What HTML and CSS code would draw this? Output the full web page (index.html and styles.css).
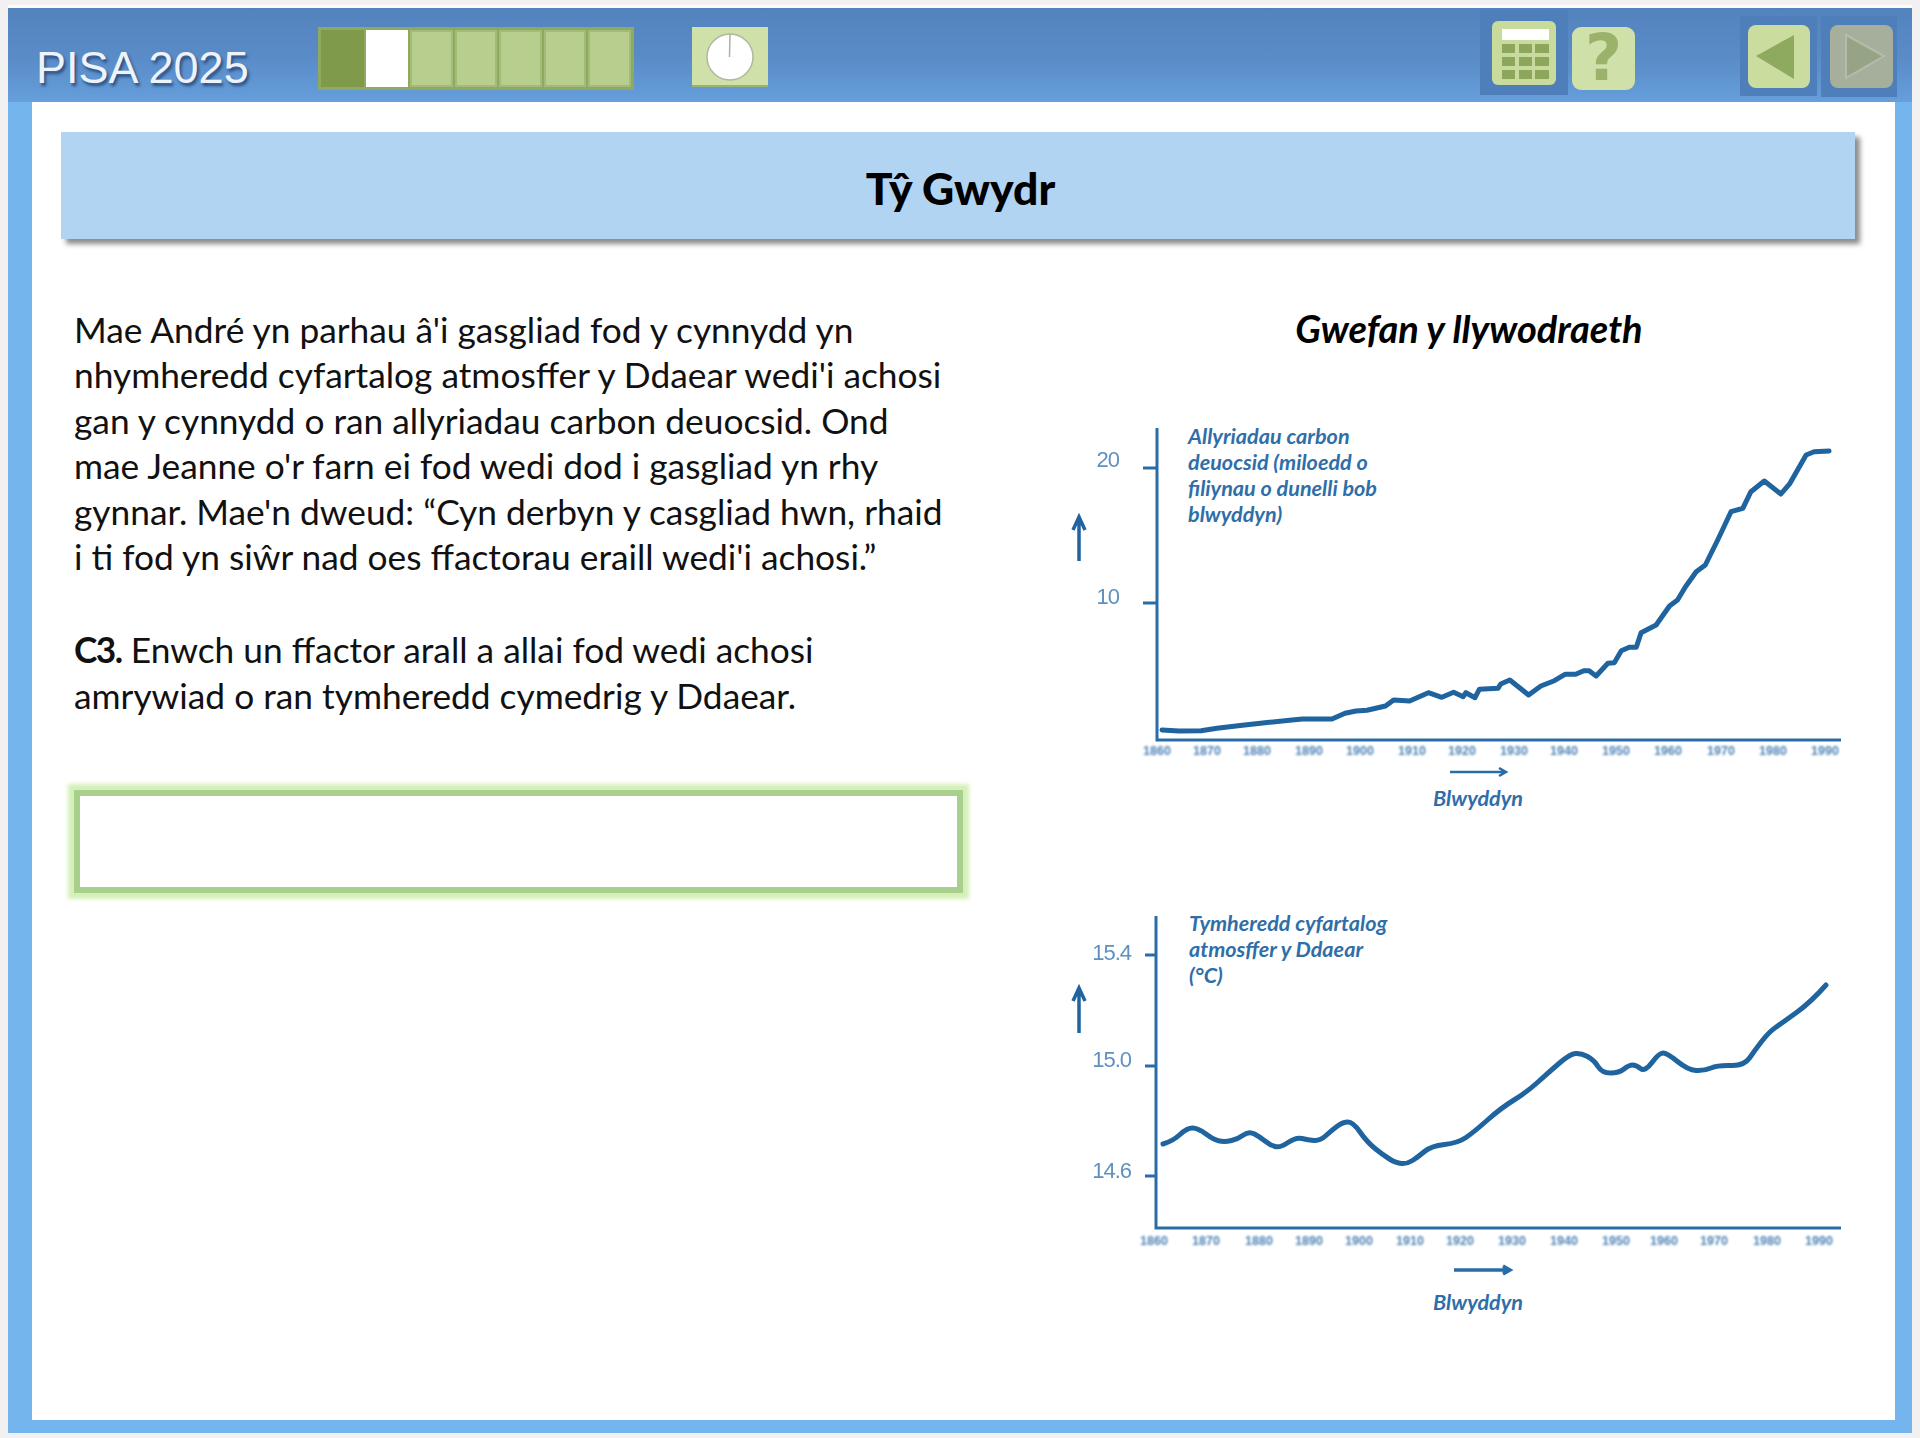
FILE: index.html
```html
<!DOCTYPE html>
<html lang="cy">
<head>
  <meta charset="UTF-8" />
  <title>PISA 2025 - Tŷ Gwydr</title>
  <link rel="stylesheet" href="styles.css">
</head>
<body>
  <div class="frame">
    <header class="topbar">
      <div class="brand">PISA 2025</div>
      <div class="progress">
        <span class="step done"></span>
        <span class="step current"></span>
        <span class="step"></span>
        <span class="step"></span>
        <span class="step"></span>
        <span class="step"></span>
        <span class="step"></span>
      </div>
      <div class="timer">
        <svg width="76" height="60" viewBox="0 0 76 60">
          <circle cx="38" cy="30" r="23" fill="#fff" stroke="#aeb9a0" stroke-width="1.5"/>
          <line x1="38" y1="7" x2="37.5" y2="30" stroke="#a9b59a" stroke-width="1.5"/>
        </svg>
      </div>
      <div class="tools">
        <div class="tool-wrap calc-wrap">
          <svg width="64" height="64" viewBox="0 0 64 64">
            <rect x="0" y="0" width="64" height="64" rx="6" fill="#c8da9c"/>
            <rect x="10" y="8" width="47" height="11" fill="#fff"/>
            <g fill="#8ca75c">
              <rect x="10" y="23" width="13" height="9"/><rect x="27" y="23" width="13" height="9"/><rect x="43" y="23" width="14" height="9"/>
              <rect x="10" y="36" width="13" height="9"/><rect x="27" y="36" width="13" height="9"/><rect x="43" y="36" width="14" height="9"/>
              <rect x="10" y="49" width="13" height="9"/><rect x="27" y="49" width="13" height="9"/><rect x="43" y="49" width="14" height="9"/>
            </g>
          </svg>
        </div>
        <div class="help">?</div>
        <div class="tool-wrap back-wrap">
          <svg width="62" height="63" viewBox="0 0 62 63">
            <rect width="62" height="63" rx="8" fill="#cbdc9f"/>
            <polygon points="8,31 46,10 46,54" fill="#8eaa5f"/>
          </svg>
        </div>
        <div class="tool-wrap next-wrap">
          <svg width="63" height="63" viewBox="0 0 63 63">
            <rect width="63" height="63" rx="8" fill="#a6af9b"/>
            <polygon points="16,10 54,31 16,53" fill="#96a384" stroke="#b4bcab" stroke-width="2"/>
          </svg>
        </div>
      </div>
    </header>

    <main class="sheet">
      <h1 class="title">Tŷ Gwydr</h1>
      <div class="columns">
        <section class="question">
          <p>Mae André yn parhau â'i gasgliad fod y cynnydd yn<br>
          nhymheredd cyfartalog atmosffer y Ddaear wedi'i achosi<br>
          gan y cynnydd o ran allyriadau carbon deuocsid. Ond<br>
          mae Jeanne o'r farn ei fod wedi dod i gasgliad yn rhy<br>
          gynnar. Mae'n dweud: “Cyn derbyn y casgliad hwn, rhaid<br>
          i ti fod yn siŵr nad oes ffactorau eraill wedi'i achosi.”</p>
          <p><b>C3.</b> Enwch un ffactor arall a allai fod wedi achosi<br>
          amrywiad o ran tymheredd cymedrig y Ddaear.</p>
          <div class="answer"></div>
        </section>

        <section class="charts">
          <h2>Gwefan y llywodraeth</h2>

          <svg class="chart first" width="800" height="420" viewBox="1060 410 800 420">
            <g class="axis">
              <path d="M1157 428V740H1841"/>
              <path d="M1143 468H1157M1143 603H1157"/>
            </g>
            <text class="val" x="1119" y="467" text-anchor="end">20</text>
            <text class="val" x="1119" y="604" text-anchor="end">10</text>
            <g class="arrow">
              <path class="up" d="M1079 561V518M1073 530L1079 517L1085 530"/>
              <path d="M1450 772H1506M1499 768L1506 772L1499 776"/>
            </g>
            <text class="lab" x="1188" y="444">Allyriadau carbon</text>
            <text class="lab" x="1188" y="470">deuocsid (miloedd o</text>
            <text class="lab" x="1188" y="496">filiynau o dunelli bob</text>
            <text class="lab" x="1188" y="522">blwyddyn)</text>
            <g class="years" text-anchor="middle">
              <text x="1157" y="755">1860</text><text x="1207" y="755">1870</text><text x="1257" y="755">1880</text>
              <text x="1309" y="755">1890</text><text x="1360" y="755">1900</text><text x="1412" y="755">1910</text>
              <text x="1462" y="755">1920</text><text x="1514" y="755">1930</text><text x="1564" y="755">1940</text>
              <text x="1616" y="755">1950</text><text x="1668" y="755">1960</text><text x="1721" y="755">1970</text>
              <text x="1773" y="755">1980</text><text x="1825" y="755">1990</text>
            </g>
            <text class="lab" x="1478" y="806" text-anchor="middle">Blwyddyn</text>
            <polyline class="curve" points="1162,730 1179,731 1201,730.7 1217,728.3 1238,725.7 1265,722.7 1292,720 1302.5,719 1332,719 1345,713.3 1356,711 1367,710.3 1385.5,706 1393.6,700 1409.6,701 1428.4,692.7 1441.8,697.3 1453.6,692.3 1463.2,696.7 1465.9,692.7 1475,697.7 1479.3,689.3 1498,688.3 1500.7,684 1509.8,680 1528.6,695 1540.9,686 1554.3,680.7 1565,674.3 1575.7,674.3 1583.8,670.7 1589.1,670.7 1596.1,676 1607.9,663.3 1614.3,662.7 1621.3,650.7 1629.3,647.3 1636.3,647.3 1641.1,632.7 1656.1,625 1669.5,606 1677.5,600 1685.5,586.7 1696.2,571.7 1705.3,565 1717.7,540 1731,511.7 1742.8,508.3 1750.9,491.7 1764.3,481 1780.9,494 1790,483.3 1806.1,455 1814.1,451.7 1829.1,451"/>
          </svg>

          <svg class="chart second" width="800" height="440" viewBox="1060 890 800 440">
            <g class="axis">
              <path d="M1156 916V1228H1841"/>
              <path d="M1145 955H1156M1145 1066H1156M1145 1176H1156"/>
            </g>
            <text class="val" x="1131" y="960" text-anchor="end">15.4</text>
            <text class="val" x="1131" y="1067" text-anchor="end">15.0</text>
            <text class="val" x="1131" y="1178" text-anchor="end">14.6</text>
            <g class="arrow">
              <path class="up" d="M1079 1033V989M1073 1001L1079 988L1085 1001"/>
              <path class="thick" d="M1454 1270H1510M1503 1266L1510 1270L1503 1274"/>
            </g>
            <text class="lab" x="1189" y="931">Tymheredd cyfartalog</text>
            <text class="lab" x="1189" y="957">atmosffer y Ddaear</text>
            <text class="lab" x="1189" y="983">(°C)</text>
            <g class="years" text-anchor="middle">
              <text x="1154" y="1245">1860</text><text x="1206" y="1245">1870</text><text x="1259" y="1245">1880</text>
              <text x="1309" y="1245">1890</text><text x="1359" y="1245">1900</text><text x="1410" y="1245">1910</text>
              <text x="1460" y="1245">1920</text><text x="1512" y="1245">1930</text><text x="1564" y="1245">1940</text>
              <text x="1616" y="1245">1950</text><text x="1664" y="1245">1960</text><text x="1714" y="1245">1970</text>
              <text x="1767" y="1245">1980</text><text x="1819" y="1245">1990</text>
            </g>
            <text class="lab" x="1478" y="1310" text-anchor="middle">Blwyddyn</text>
            <path class="curve" d="M1163 1144 Q1173 1141 1180 1134.5 Q1187 1128 1192.5 1128 Q1198 1128 1206 1134 Q1214 1140 1219.5 1141 Q1225 1142 1231.5 1140.5 Q1238 1139 1243.5 1135 Q1249 1131 1254.5 1134 Q1260 1137 1265 1141 Q1270 1145 1275 1146.5 Q1280 1148 1288 1142.5 Q1296 1137 1302 1138.5 Q1308 1140 1314 1140.5 Q1320 1141 1326 1135.5 Q1332 1130 1337.5 1126 Q1343 1122 1348 1122 Q1353 1122 1360 1132 Q1367 1142 1375 1148.5 Q1383 1155 1389.5 1159 Q1396 1163 1401.5 1163.5 Q1407 1164 1412.5 1160.5 Q1418 1157 1424.5 1151.5 Q1431 1146 1444.5 1144.5 Q1458 1143 1466 1137.5 Q1474 1132 1487.5 1120 Q1501 1108 1514 1100 Q1527 1092 1538 1082 Q1549 1072 1559.5 1063 Q1570 1054 1575.5 1053.5 Q1581 1053 1587.5 1056.5 Q1594 1060 1598 1066.5 Q1602 1073 1610.5 1073 Q1619 1073 1624 1069 Q1629 1065 1632.5 1065 Q1636 1065 1640.5 1068.5 Q1645 1072 1652 1062.5 Q1659 1053 1663 1053 Q1667 1053 1677.5 1061.5 Q1688 1070 1696 1070.5 Q1704 1071 1711 1068 Q1718 1065 1731 1065.5 Q1744 1066 1749.5 1058 Q1755 1050 1762 1041 Q1769 1032 1775.5 1027.5 Q1782 1023 1796.5 1012.5 Q1811 1002 1826 985"/>
          </svg>
        </section>
      </div>
    </main>
  </div>
</body>
</html>
```

FILE: styles.css
```css
* { box-sizing: border-box; }
html, body { margin: 0; }
body {
  width: 1920px;
  height: 1438px;
  background: #f1f1f1;
  font-family: Lato, "Noto Sans", sans-serif;
  color: #111;
  padding: 8px 8px 5px;
  overflow: hidden;
}
.frame {
  height: 1425px;
  background: #74b5ee;
  box-shadow: 0 -3px 0 #fbfbfb;
  display: flex;
  flex-direction: column;
}

/* top bar */
.topbar {
  height: 94px;
  flex: none;
  background: linear-gradient(#5383bd, #5a8cc8 55%, #659fdc);
  display: flex;
  align-items: flex-start;
  padding-left: 28px;
}
.brand {
  width: 282px;
  margin-top: 33px;
  font-family: "Liberation Sans", Arial, sans-serif;
  font-size: 45px;
  line-height: 54px;
  color: #eef3fa;
  text-shadow: 2px 3px 3px #2b4f80;
  white-space: nowrap;
}
.progress {
  width: 316px;
  height: 63px;
  margin-top: 19px;
  padding: 3px;
  background: #8fa95f;
  display: flex;
  gap: 2px;
}
.step {
  flex: 1;
  background: #b7ce8f;
  border: 2px solid #a3bb78;
}
.step.done { background: #7e9a4a; border-color: #7e9a4a; }
.step.current { background: #fff; border-color: #fff; }
.timer {
  width: 76px;
  height: 60px;
  margin: 19px 0 0 58px;
  background: #cfe0a8;
  border-bottom: 2px solid #9cb271;
}
.timer svg { display: block; }
.tools {
  margin-left: auto;
  padding-right: 15px;
  display: flex;
  align-items: flex-start;
}
.tool-wrap {
  display: flex;
  align-items: center;
  justify-content: center;
  background: #4f7fbb;
}
.calc-wrap { width: 88px; height: 85px; margin-top: 2px; }
.back-wrap { width: 77px; height: 80px; margin: 8px 0 0 105px; }
.next-wrap { width: 76px; height: 81px; margin: 8px 0 0 4px; padding-left: 5px; }
.help {
  width: 63px;
  height: 63px;
  margin: 19px 0 0 4px;
  background: #cfe0a8;
  border-radius: 9px;
  color: #9ab26a;
  font-family: "DejaVu Sans", sans-serif;
  font-weight: bold;
  font-size: 64px;
  line-height: 63px;
  text-align: center;
}

/* white sheet */
.sheet {
  flex: 1;
  margin: 0 17px 13px 24px;
  background: #fff;
  padding: 30px 40px 0 29px;
}
.title {
  height: 107px;
  margin: 0;
  padding-left: 5px;
  background: #b2d4f3;
  box-shadow: 5px 5px 5px #8c8c8c;
  font-size: 44.5px;
  font-weight: 900;
  line-height: 112px;
  text-align: center;
  color: #000;
}
.columns {
  display: flex;
  margin-top: 68px;
}

/* left column */
.question {
  width: 889px;
  margin-left: 13px;
  flex: none;
}
.question p {
  margin: 0 0 48px;
  font-size: 35.3px;
  line-height: 45.4px;
  white-space: nowrap;
}
.question b { letter-spacing: -1.5px; }
.answer {
  height: 103px;
  margin-top: 72px;
  background: #fff;
  border: 6px solid #a8cf8b;
  box-shadow: 0 0 4px 6px #d4f0b8;
}

/* right column */
.charts {
  width: 800px;
  margin-left: 97px;
  flex: none;
}
.charts h2 {
  margin: 0;
  padding-left: 18px;
  font-size: 38px;
  font-style: italic;
  font-weight: bold;
  line-height: 43px;
  text-align: center;
  color: #000;
}
.chart { display: block; }
.chart.first { margin-top: 60px; }
.chart.second { margin-top: 60px; }
.axis path, .arrow path {
  fill: none;
  stroke: #2a6ca8;
  stroke-width: 3;
  filter: blur(0.3px);
}
.arrow path { stroke-width: 2.5; }
.arrow path.up { stroke-width: 3.5; stroke: #1f639f; }
.arrow path.thick { stroke-width: 3.5; }
.curve {
  fill: none;
  stroke: #1f639f;
  stroke-width: 5;
  stroke-linejoin: round;
  stroke-linecap: round;
  filter: blur(0.5px);
}
.val {
  font-family: "Liberation Sans", Arial, sans-serif;
  font-size: 22px;
  letter-spacing: -1px;
  fill: #5f90c0;
  filter: blur(0.3px);
}
.lab {
  font-size: 21.6px;
  font-style: italic;
  font-weight: bold;
  fill: #2f6ea8;
}
.years {
  font-family: "Liberation Sans", Arial, sans-serif;
  font-size: 12.5px;
  font-weight: bold;
  fill: #4f84b5;
  filter: blur(0.8px);
}
```
